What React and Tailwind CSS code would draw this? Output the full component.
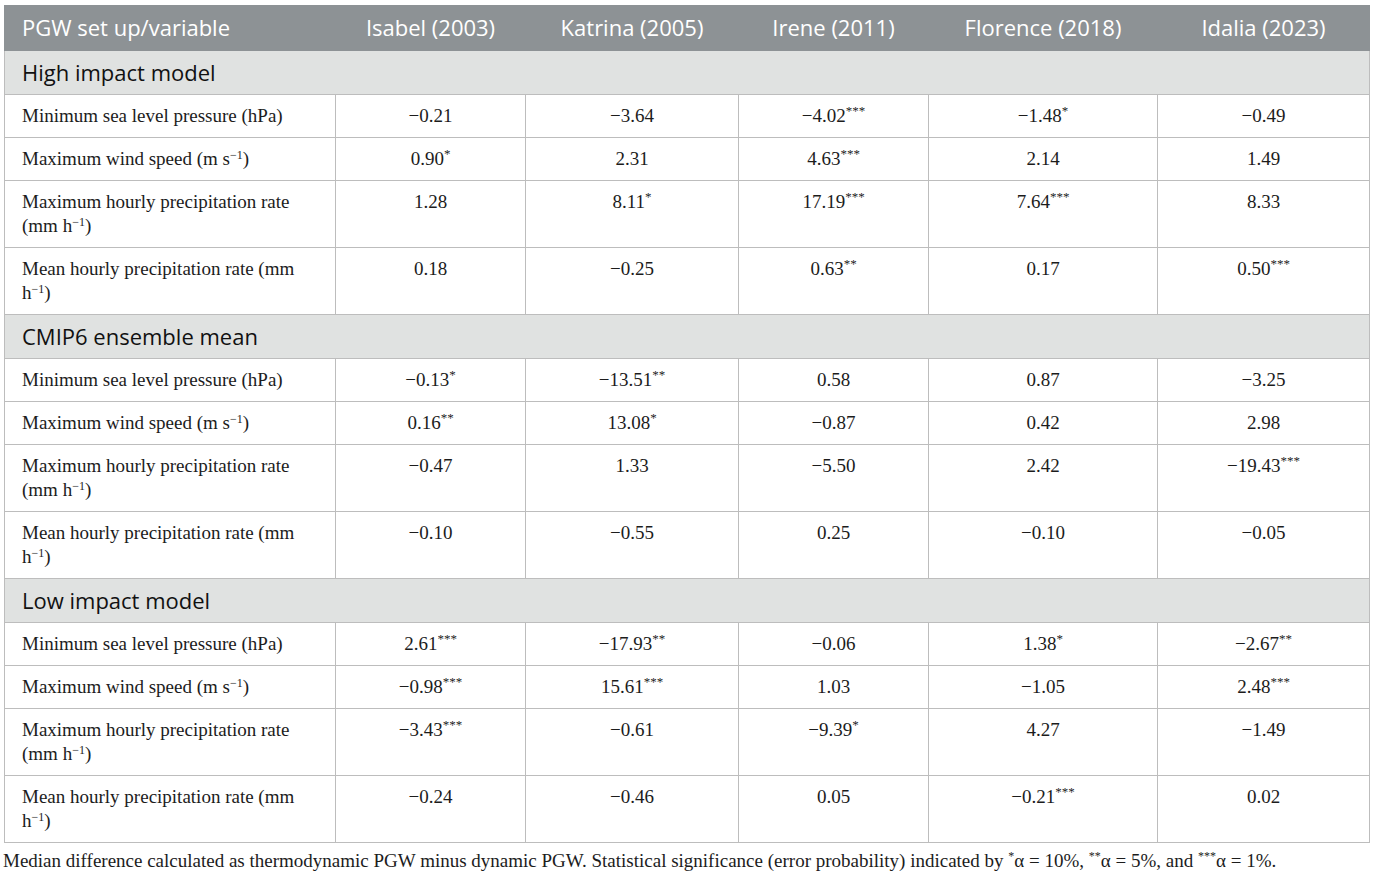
import React from "react";

const Sup = ({ children, size = "text-[12px]", off = "top-[-7px]" }) => (
  <span className={`${size} ${off} relative leading-none`}>{children}</span>
);

const U = ({ children }) => (
  <Sup size="text-[12px]" off="top-[-6px]">{children}</Sup>
);

const label = (k) => {
  if (k === 0) return <>Minimum sea level pressure (hPa)</>;
  if (k === 1) return <>Maximum wind speed (m s<U>−1</U>)</>;
  if (k === 2) return <>Maximum hourly precipitation rate (mm h<U>−1</U>)</>;
  return <>Mean hourly precipitation rate (mm h<U>−1</U>)</>;
};

const sections = [
  {
    title: "High impact model",
    data: [
      [["−0.21"], ["−3.64"], ["−4.02", "***"], ["−1.48", "*"], ["−0.49"]],
      [["0.90", "*"], ["2.31"], ["4.63", "***"], ["2.14"], ["1.49"]],
      [["1.28"], ["8.11", "*"], ["17.19", "***"], ["7.64", "***"], ["8.33"]],
      [["0.18"], ["−0.25"], ["0.63", "**"], ["0.17"], ["0.50", "***"]],
    ],
  },
  {
    title: "CMIP6 ensemble mean",
    data: [
      [["−0.13", "*"], ["−13.51", "**"], ["0.58"], ["0.87"], ["−3.25"]],
      [["0.16", "**"], ["13.08", "*"], ["−0.87"], ["0.42"], ["2.98"]],
      [["−0.47"], ["1.33"], ["−5.50"], ["2.42"], ["−19.43", "***"]],
      [["−0.10"], ["−0.55"], ["0.25"], ["−0.10"], ["−0.05"]],
    ],
  },
  {
    title: "Low impact model",
    data: [
      [["2.61", "***"], ["−17.93", "**"], ["−0.06"], ["1.38", "*"], ["−2.67", "**"]],
      [["−0.98", "***"], ["15.61", "***"], ["1.03"], ["−1.05"], ["2.48", "***"]],
      [["−3.43", "***"], ["−0.61"], ["−9.39", "*"], ["4.27"], ["−1.49"]],
      [["−0.24"], ["−0.46"], ["0.05"], ["−0.21", "***"], ["0.02"]],
    ],
  },
];

const headers = ["PGW set up/variable", "Isabel (2003)", "Katrina (2005)", "Irene (2011)", "Florence (2018)", "Idalia (2023)"];
const widths = [331, 190, 213, 190, 229, 212];

const sans = { fontFamily: '"Open Sans", "Noto Sans", sans-serif' };
const serif = { fontFamily: '"Liberation Serif", "Times New Roman", serif' };

export default function App() {
  return (
    <div className="w-[1375px] h-[876px] bg-white overflow-hidden">
      <div className="pt-[5px] pl-[4px]">
        <table className="border-collapse table-fixed w-[1365px]">
          <colgroup>
            {widths.map((w, i) => (
              <col key={i} style={{ width: w }} />
            ))}
          </colgroup>
          <thead>
            <tr className="bg-[#8d9295] h-[45px]">
              {headers.map((h, i) => (
                <th
                  key={i}
                  style={sans}
                  className={`text-white font-normal text-[22px] leading-[24px] pt-0 pb-[3px] border border-[#8d9295] ${i > 0 ? "border-l-[#a3a7aa] text-center" : "text-left pl-[17px]"}`}
                >
                  {h}
                </th>
              ))}
            </tr>
          </thead>
          <tbody>
            {sections.map((s, si) => (
              <React.Fragment key={si}>
                <tr className="bg-[#e0e2e1] h-[44px]">
                  <td colSpan={6} style={sans} className="text-[22px] leading-[24px] text-[#111] pl-[17px] pb-[2px] border border-[#bdbdbd]">
                    {s.title}
                  </td>
                </tr>
                {s.data.map((r, ri) => (
                  <tr key={ri} className="bg-white">
                    <td style={serif} className="align-top text-[19px] leading-[24px] text-[#1c1c1c] pl-[17px] pr-[14px] pt-[9px] pb-[9px] border border-[#bdbdbd]">
                      {label(ri)}
                    </td>
                    {r.map((c, ci) => (
                      <td key={ci} style={serif} className="align-top text-center text-[19px] leading-[24px] text-[#1c1c1c] pt-[9px] pb-[9px] border border-[#bdbdbd]">
                        {c[0]}
                        {c[1] ? <Sup size="text-[13px]">{c[1]}</Sup> : null}
                      </td>
                    ))}
                  </tr>
                ))}
              </React.Fragment>
            ))}
          </tbody>
        </table>
        <div style={serif} className="text-[19px] leading-[24px] text-[#1c1c1c] pt-[6px] -ml-[1px] whitespace-nowrap">
          Median difference calculated as thermodynamic PGW minus dynamic PGW. Statistical significance (error probability) indicated by{" "}
          <Sup size="text-[12px]">*</Sup>α = 10%, <Sup size="text-[12px]">**</Sup>α = 5%, and <Sup size="text-[12px]">***</Sup>α = 1%.
        </div>
      </div>
    </div>
  );
}
